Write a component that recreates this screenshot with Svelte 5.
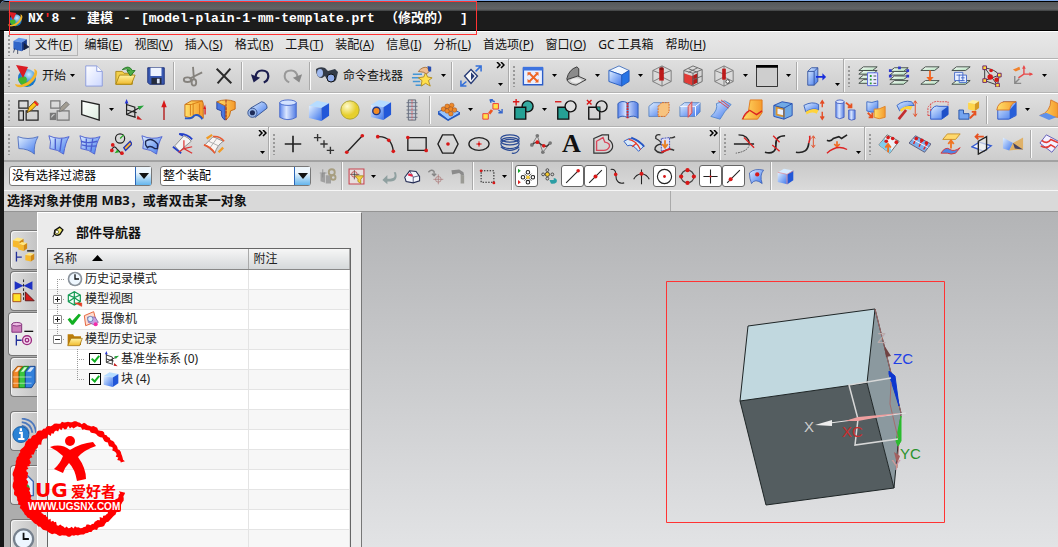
<!-- App.svelte -->
<script lang="ts">
  type Item = string;

  const menus = [
    ['文件', 'F'], ['编辑', 'E'], ['视图', 'V'], ['插入', 'S'], ['格式', 'R'],
    ['工具', 'T'], ['装配', 'A'], ['信息', 'I'], ['分析', 'L'], ['首选项', 'P'],
    ['窗口', 'O'], ['GC 工具箱', ''], ['帮助', 'H'],
  ];

  // '|' separator, 'v' drop-down arrow, '>' overflow arrow, '>>' overflow with chevrons, '>>>' same with free space before it
  const rows: Item[][][] = [
    [
      ['@start', 'new', 'open', 'save', '|', 'cut', 'delete', '|', 'undo', 'redo', '|', '@find', 'star', 'v', '|', 'touch', '>>'],
      ['fit', 'v', 'rotate', 'v', 'shaded', 'v', 'section', 'sectionGrid', 'sectionEdit', 'v', 'swatch', 'v', '|', 'exit', '>'],
      ['layerSettings', 'layerView', 'layerMove', 'layerCopy', 'points', 'csysSmall', 'v', '>>'],
    ],
    [
      ['sketch', 'sketchTask', 'plane', 'v', 'csys', 'axis', 'extrude', 'revolve', 'tube', 'cylinder', 'block', 'sphere', 'hole', 'thread', '|',
        'pattern', 'v', 'instance', 'unite', 'v', 'subtract', 'intersect', 'sew', 'split', 'divide', 'trim', 'trimBody', 'shell', 'offset', 'cylMove',
        'replace', 'patch', 'wrap', 'scale', '|', 'blend', 'v', 'faceBlend'],
    ],
    [
      ['ruled', 'curves', 'mesh', 'studio', 'nside', 'sweep', 'swept', '>>>'],
      ['point', 'pointSet', 'line', 'arc', 'rect', 'hexagon', 'ellipse', 'helix', 'spline', '@text', 'offsetCurve', 'bridge', 'project', '>>>'],
      ['trimCurve', 'curveEdge', 'curveLength', 'curveSmooth', '>'],
      ['xform', 'poles', 'flatten', 'mirror', 'twist', '|', 'snip'],
    ],
  ];

  const snaps = ['|', 'snapFilter', 'v', 'back', 'eraser', 'deselect', 'hammer', '|', 'marquee', 'v', '|', '*snapAll', 'snapMore', '*snapEnd', '*snapMid',
    'snapCurve', 'snapCross', '*snapCenter', 'snapQuad', '*snapPoint', '*snapOn', 'snapFace', '|', 'snapCube'];

  const dot = (x: number, y: number, r = 2) => `<circle cx="${x}" cy="${y}" r="${r}" fill="#d81818"/>`;
  const layer = (y: number) => `<path d="M2 ${y + 4}L7 ${y}H22L17 ${y + 4}z" fill="url(#leaf)" stroke="#3f4844"/>`;
  const sheet = (extra: string) => `<path d="M1 3Q12 8 23 4Q19 10 17 23Q11 18 2 17Q4 9 1 3z" fill="url(#sky)" stroke="#4b5fd0"/>${extra}`;
  const line = (d: string, c = '#222', w = 1.5) => `<path d="${d}" fill="none" stroke="${c}" stroke-width="${w}"/>`;
  const cube = (x: number, y: number, s: number, top = '#b6dcff', a = 'url(#sky)', b = '#2257d8') =>
    `<path d="M${x} ${y + s * 0.25}L${x + s * 0.4} ${y}L${x + s} ${y + s * 0.12}L${x + s * 0.62} ${y + s * 0.36}z" fill="${top}"/>` +
    `<path d="M${x} ${y + s * 0.25}L${x + s * 0.62} ${y + s * 0.36}V${y + s}L${x} ${y + s * 0.85}z" fill="${a}"/>` +
    `<path d="M${x + s * 0.62} ${y + s * 0.36}L${x + s} ${y + s * 0.12}V${y + s * 0.74}L${x + s * 0.62} ${y + s}z" fill="${b}"/>`;
  const cage = `<path d="M2 6L12 1L22 6V18L12 23L2 18zM2 6L12 10L22 6M12 10V23M2 18L12 13L22 18M12 1V13" fill="#ddd" fill-opacity=".5" stroke="#777"/>`;
  const globe = `<ellipse cx="13" cy="14" rx="9" ry="9" fill="url(#globe)"/><path d="M7 13Q12 11 13 15Q11 19 16 22Q6 23 4 15z" fill="#45b52c"/><path d="M1 20Q9 23 17 15Q22 9 20 5Q25 6 22 13Q17 22 8 23Q2 24 1 20z" fill="#f4b52a"/><path d="M2 1L14 3L9 14z" fill="#db1c24"/>`;

  const icons: Record<string, string> = {
    start: globe,
    find: `<path d="M1 5Q5 2 10 4L13 7L20 5L23 8L21 16Q18 20 13 17L10 12L7 14Q1 14 1 5z" fill="#333b48"/><ellipse cx="5" cy="9" rx="3" ry="4" fill="#9fb9ee"/><ellipse cx="16" cy="14" rx="4" ry="4" fill="#8fabe8" stroke="#111"/>`,
    new: `<path d="M3 1H15L21 7V23H3z" fill="url(#paper)" stroke="#8a99dc"/><path d="M15 1V7H21" fill="#fff" stroke="#8a99dc"/>`,
    open: `<path d="M2 21V7H9L11 9H20V21z" fill="#f2cf49" stroke="#ab8715"/><path d="M2 21L6 11H23L19 21z" fill="url(#gold)" stroke="#ab8715"/><path d="M9 5Q16 -1 20 6H23L18 12L14 6H17Q14 3 9 5z" fill="#4fae46" stroke="#267a2a"/>`,
    save: `<path d="M3 3H21V21H5L3 19z" fill="#3959b2" stroke="#1b2e75"/><path d="M6 3H18V12H6z" fill="#eef4ff"/><path d="M7 14H18V21H7z" fill="#242b3c"/><path d="M13 15H16V20H13z" fill="#d9e2f4"/>`,
    cut: `<g fill="none" stroke="#85827d" stroke-width="2"><path d="M12 2L13 15M22 8L8 15"/><ellipse cx="6" cy="16" rx="4" ry="2.5"/><ellipse cx="13" cy="19" rx="2.5" ry="3.5"/></g>`,
    delete: line('M4 4L20 20M19 4L5 20', '#2b2b2b', 2.2),
    undo: `<path d="M6 13Q7 6 13 6Q20 6 20 12Q20 17 15 19" fill="none" stroke="#1b1d4e" stroke-width="2.4"/><path d="M1 10L4 19L11 14z" fill="#1b1d4e"/>`,
    redo: `<path d="M18 13Q17 6 11 6Q4 6 4 12Q4 17 9 19" fill="none" stroke="#999" stroke-width="2.2"/><path d="M23 10L20 19L13 14z" fill="#888"/>`,
    star: `<path d="M2 10H12M1 14H10M2 18H10M5 22H13" stroke="#4496d6" stroke-width="1.6"/><path d="M16 8L18 13L23 14L19 17L21 23L16 20L11 23L12 17L8 14L14 13z" fill="#ffe04d" stroke="#b48d20"/><path d="M8 7Q13 1 18 3L20 7Q17 11 14 8z" fill="#efbd91" stroke="#a7743d"/><path d="M18 1L22 2L22 7L19 7z" fill="#294eb0"/>`,
    touch: `<path d="M12 5L19 12L12 20L5 12z" fill="#f8f8f8" stroke="#263a75" stroke-width="1.5"/><path d="M12 8V17L16 12z" fill="#263a75"/><path d="M17 1H23V7M23 1L17 7M1 17V23H7M1 23L7 18" fill="none" stroke="#3570d8" stroke-width="1.7"/>`,
    fit: `<path d="M1.500 3.500H22.500V21.500H1.500z" fill="#e9efff" stroke="#2b5cc8" stroke-width="1.500"/><path d="M1 2H23V6H1z" fill="#3d73df"/><path d="M8 9L17 18M17 9L8 18" stroke="#ee6524" stroke-width="2"/><path d="M6 8H10L6 12zM14 8H18V12zM6 15V19H10zM18 15V19H14z" fill="#ee6524"/>`,
    rotate: `<path d="M2 15Q4 5 13 2L15 4V16L5 19z" fill="#8b8b8b" stroke="#333"/><path d="M2 16L14 12L23 16L12 22Q4 21 2 16z" fill="#cacaca" stroke="#333"/><ellipse cx="12" cy="17" rx="6" ry="2.500" fill="#ededed"/>`,
    shaded: `<path d="M1 6L12 1L23 6L15 11z" fill="#f0f7ff" stroke="#4773bd"/><path d="M1 6L15 11V23L1 18z" fill="url(#sky)" stroke="#245cbe"/><path d="M15 11L23 6V18L15 23z" fill="#2674e6" stroke="#245cbe"/>`,
    section: `${cage}<path d="M9 4H14V17H9z" fill="#bd1b1b"/><ellipse cx="11.500" cy="4" rx="2.500" ry="1.500" fill="#891010"/>`,
    sectionGrid: `<path d="M2 9L11 12V22L2 19z" fill="#e33b36"/><path d="M11 12L17 9V19L11 22z" fill="#b61a19"/><path d="M2 6L12 1L22 5V18L12 23L2 19zM2 6L12 9L22 5M12 9V23M7 4L17 8V20M12 16L22 12M17 3L7 8" fill="none" stroke="#666"/>`,
    sectionEdit: `${cage}<path d="M10 4H14V16H10z" fill="#bd1b1b"/><circle cx="16" cy="18" r="2" fill="#fff" stroke="#333"/>`,
    swatch: `<path d="M.500 .500H23.500V23.500H.500z" fill="#cecece" stroke="#222"/><path d="M0 0H24V3H0z" fill="#000"/>`,
    exit: `<path d="M3 7L7 3H14V18L10 22H3z" fill="url(#sky)" stroke="#35539e"/><path d="M3 7H10V22M10 7L14 3" fill="none" stroke="#35539e"/><path d="M12 12H19V9L23 13L19 17V14H12z" fill="#182edc"/>`,
    layerSettings: `${layer(16)}${layer(11)}${layer(6)}${layer(2)}<path d="M11.500 8.500H22.500V22.500H11.500z" fill="#e9edff" stroke="#5665df"/><path d="M14 12H16M14 16H16M14 20H16" stroke="#2a9d35" stroke-width="2"/><path d="M18 12H21M18 16H21M18 20H21" stroke="#444"/>`,
    layerView: `${layer(17)}${layer(12)}${layer(7)}${layer(3)}<path d="M1 6H4M11 3H14M20 6H23M1 12H4M20 12H23" stroke="#2e39cc" stroke-width="3"/>`,
    layerMove: `${layer(17)}${layer(2)}<path d="M11 6H13V13H16L12 18L8 13H11z" fill="#f36421"/>`,
    layerCopy: `${layer(17)}${layer(2)}<path d="M5 8H14V17H5zM10 11H18V19H10z" fill="#e9efff" stroke="#4267c8"/><path d="M7 11H11M12 14H16M12 17H16" stroke="#4267c8"/>`,
    points: `${line('M4 3V17L18 22L20 11Q16 5 4 3L18 22M4 17L20 11', '#333', 1)}${dot(11, 6)}${dot(10, 13, 3)}${dot(17, 16, 2.5)}<path d="M2 1H6V5H2zM2 15H6V19H2zM18 9H22V13H18zM16 20H20V24H16z" fill="#ffd93d" stroke="#681c68"/>`,
    csysSmall: `${line('M13 2V10H22M13 10L7 14', '#e84a4a')}${line('M3 12V20H10M3 20L8 15', '#888')}<path d="M1 5L8 2L9 5L4 7z" fill="#f1822b"/><path d="M13 0L11 4H15zM23 10L19 8V12z" fill="#e84a4a"/>`,
    sketch: `<path d="M2 2H12V10H2zM2 13H7V23H2zM10 13H23V23H10z" fill="none" stroke="#222" stroke-width="1.300"/><path d="M11 15L13 9L20 2L23 5L16 12z" fill="#ffc61a" stroke="#6b4a15"/><path d="M19 3L23 7" stroke="#e22" stroke-width="2"/>`,
    sketchTask: `<path d="M3 2H13V10H3zM10 13H23V23H10z" fill="none" stroke="#777" stroke-width="1.300"/><path d="M2 15H9V23H2z" fill="#777"/><path d="M4 20Q4 17 7 17" stroke="#eee" fill="none"/><path d="M12 14L14 9L20 3L23 6L17 12z" fill="#a19c91" stroke="#777"/>`,
    plane: `<path d="M3 2L22 6V23L3 17z" fill="url(#plane)" stroke="#222" stroke-width="1.500"/>`,
    csys: `<path d="M5 3V17L15 20M5 17L20 9M5 6L14 9V19M5 12L16 15" fill="none" stroke="#222" stroke-width="1.300"/><path d="M5 0L3 5H7z" fill="#2433d5"/><path d="M24 7L17 8L19 12z" fill="#26a33a"/><path d="M22 23L16 22L17 18z" fill="#c62020"/>`,
    axis: `<path d="M12 8V23" stroke="#b41a1a" stroke-width="1.500"/><path d="M12 1L9 9H15z" fill="#d81818"/>`,
    extrude: `<path d="M1 6L8 2H20L21 5V21L18 18Q13 15 9 21L1 19z" fill="url(#orange)" stroke="#c46a14"/><path d="M7 6V18M10 5V18M17 5V17M1 6L8 6L20 2" fill="none" stroke="#d67c15"/><path d="M1 21Q9 22 11 18Q16 16 20 22" fill="none" stroke="#2458c8" stroke-width="2"/><path d="M23 17V10" stroke="#d22" stroke-width="1.500"/><path d="M23 6L21 11H24z" fill="#d22"/>`,
    revolve: `<path d="M2 3L11 5V23Q6 20 7 13L2 11z" fill="#4c78df" stroke="#2545a0"/><path d="M2 3Q12 -1 22 3V11L17 13Q17 19 12 23V8z" fill="url(#orange)" stroke="#c46a14"/><path d="M12 1V23" stroke="#922" stroke-dasharray="3 1"/>`,
    tube: `<path d="M5 10L17 3Q23 4 23 10L10 20z" fill="url(#sky)" stroke="#33518f"/><circle cx="7" cy="15" r="5" fill="#9cb8e8" stroke="#33518f"/><circle cx="7" cy="15" r="2.800" fill="#1d2b58"/>`,
    cylinder: `<path d="M3 4H21V20Q12 25 3 20z" fill="url(#steel)" stroke="#4668ca"/><ellipse cx="12" cy="4" rx="9" ry="3" fill="#d3e2ff" stroke="#4668ca"/>`,
    block: cube(1, 2, 22),
    sphere: `<circle cx="12" cy="12" r="10" fill="url(#ball)" stroke="#aaa031"/>`,
    hole: `${cube(1, 1, 22)}<circle cx="7" cy="13" r="4" fill="#f38a22" stroke="#1c3688" stroke-width="1.500"/>`,
    thread: `<path d="M8 1H16V23H8z" fill="#c7cdd8" stroke="#5d6470"/><path d="M6 4H18M6 8H18M6 12H18M6 16H18M6 20H18" stroke="#687083"/><path d="M12 1V23" stroke="#d55" stroke-dasharray="2 1"/>`,
    pattern: `<path d="M0 14L12 9L24 15L11 23z" fill="#96c4ff" stroke="#2559c0"/><path d="M0 14V17L11 24L24 17V15L11 22z" fill="#2559c0"/><g fill="#ee8a2a" stroke="#a64e13" stroke-width=".600"><circle cx="6" cy="11" r="2.500"/><circle cx="10" cy="8" r="2.500"/><circle cx="15" cy="7" r="2.500"/><circle cx="10" cy="13" r="2.500"/><circle cx="14" cy="11" r="2.500"/><circle cx="18" cy="12" r="2.500"/><circle cx="14" cy="16" r="2.500"/></g>`,
    instance: `<path d="M13 5H19V11H13zM2 16H8V22H2z" fill="#ffe24b" stroke="#e33"/><path d="M9 16L12 12" stroke="#e52" stroke-width="3"/><path d="M15 3L10 1M13 0L10 1L11 4M19 12L23 15M23 11V15H19" fill="none" stroke="#3464cb" stroke-width="1.500"/>`,
    unite: `<circle cx="17" cy="8" r="6" fill="#35aaa0" stroke="#111" stroke-width="1.500"/><path d="M3 9H15V22H3z" fill="#25a195" stroke="#111" stroke-width="1.500"/><path d="M1 3H8M4.500 0V7" stroke="#d81818" stroke-width="1.500"/>`,
    subtract: `<path d="M3 9H15V22H3z" fill="#25a195" stroke="#111" stroke-width="1.500"/><circle cx="17" cy="8" r="6" fill="#ddd" stroke="#111" stroke-width="1.500"/><path d="M0 3H7" stroke="#d81818" stroke-width="1.500"/>`,
    intersect: `<path d="M3 9H15V22H3z" fill="none" stroke="#111" stroke-width="1.500"/><path d="M11 9H15V13Q11 13 11 9z" fill="#25a195"/><circle cx="17" cy="8" r="6" fill="none" stroke="#111" stroke-width="1.500"/><path d="M1 1L6 6M6 1L1 6" stroke="#d81818" stroke-width="1.500"/>`,
    sew: `<path d="M1 5Q5 1 11 4V20Q5 17 1 21zM12 4Q19 1 23 5V21Q19 17 12 20z" fill="url(#steel)" stroke="#2b59b4"/><path d="M11.500 4V21" stroke="#d22" stroke-width="2" stroke-dasharray="2 1"/>`,
    split: `<path d="M1 8L6 4H22V14L17 19H1z" fill="url(#sky)" stroke="#5f87c1"/><path d="M11 8L15 4H23V14L19 19H11z" fill="#f7c37f" stroke="#d7651c" stroke-dasharray="2 1"/>`,
    divide: `<path d="M1 8L6 4H23V14L18 19H1z" fill="url(#sky)" stroke="#5f87c1"/><path d="M1 8H18V19M18 8L23 4" fill="none" stroke="#fff"/><path d="M10 20V8L14 3V15z" fill="#f1b0ae" stroke="#d44"/>`,
    trim: `<path d="M1 19Q9 12 7 5L16 2L23 6Q15 14 11 22z" fill="url(#sky)" stroke="#5688cc"/><path d="M9 2L20 10M12 1L21 8" stroke="#d44"/>`,
    trimBody: `<path d="M10 1H23V15L18 22H1L8 14z" fill="url(#orange)" stroke="#e17a1a"/><path d="M9 12L17 17L23 13M9 13Q4 15 2 22" fill="none" stroke="#d22" stroke-width="1.500"/>`,
    shell: `<path d="M2 7L11 3L22 5V18L13 22L2 19z" fill="#70a9e5" stroke="#244db2"/><path d="M5 9L13 11V19L5 17z" fill="#eaf0fc" stroke="#d79430" stroke-width="2"/><path d="M2 7L13 10L22 5M13 10V22" fill="none" stroke="#234eae"/>`,
    offset: `<path d="M1 7Q10 2 17 6V12Q10 9 3 14z" fill="url(#sky)" stroke="#3a63ba"/><path d="M3 14Q10 9 17 12L15 16Q9 13 4 17z" fill="#ffd33b"/><path d="M21 2V9M21 14V22M19 5L21 2L23 5M19 19L21 22L23 19" stroke="#e44a22" fill="none" stroke-width="1.500"/>`,
    cylMove: `<path d="M2 3H11V20Q6 23 2 20z" fill="url(#steel)" stroke="#4b64c0"/><ellipse cx="6.500" cy="3" rx="4.500" ry="2" fill="#dbe6ff" stroke="#4b64c0"/><path d="M16 12H23V22Q19 24 16 22z" fill="url(#steel)" stroke="#4b64c0"/><path d="M13 4L19 9M19 5V9H15" fill="none" stroke="#e65221" stroke-width="2"/>`,
    replace: `<path d="M2 3Q7 5 14 2V13Q8 16 2 13z" fill="url(#sky)" stroke="#3a68c5"/><path d="M10 11Q15 12 22 8V20Q15 23 10 20z" fill="url(#orange)" stroke="#dd842c"/><path d="M3 15L8 20M8 15V20H4" fill="none" stroke="#e65221" stroke-width="2"/>`,
    patch: `<path d="M1 7Q8 1 17 3L20 7Q10 7 4 13z" fill="url(#sky)" stroke="#3a68c5"/><path d="M4 12Q10 6 18 8L16 12Q10 9 6 14z" fill="#ffd33b"/><path d="M3 22L11 12" stroke="#c32d2d" stroke-width="3"/><path d="M21 2V19M19 5L21 2L23 5M19 16L21 19L23 16" fill="none" stroke="#e44a22"/>`,
    wrap: `<path d="M4 13Q8 6 13 8H23V17L16 22H4z" fill="url(#sky)" stroke="#2854c7"/><path d="M16 22V13L23 8V17z" fill="#1f50c8"/><path d="M1 18V9Q7 1 14 3H23V7M1 18H4M4 13V5" fill="none" stroke="#d44" stroke-dasharray="2 1"/>`,
    scale: `${cube(11, 1, 12, '#fff1a1', '#ffd64a', '#d69b23')}<path d="M1 12H6V16H12V22H1z" fill="#75a5f0" stroke="#2451a6"/><path d="M13 21L19 15M15 14H19V18" fill="none" stroke="#e65221" stroke-width="2"/>`,
    blend: `<path d="M3 10L9 3H23V18L15 22H3z" fill="url(#sky)" stroke="#2854c7"/><path d="M2 12Q3 4 10 3H23Q17 5 16 12z" fill="url(#orange)" stroke="#d7762a"/><path d="M16 12V22L23 17V4z" fill="#285fd8"/>`,
    faceBlend: `<path d="M14 1L22 5V20L2 18Q14 14 14 1z" fill="url(#orange)" stroke="#d7762a"/><path d="M1 18L9 15L20 20L12 23z" fill="#5e91eb"/>`,
    ruled: `<path d="M1 4Q12 8 23 4Q18 12 19 23Q12 17 2 17z" fill="url(#sky)" stroke="#5271be"/>`,
    curves: sheet(line('M8 6L8 18M15 6L13 20', '#4b5fd0')),
    mesh: sheet(line('M8 6L8 18M15 6L13 20M2 9Q10 12 20 9M3 13Q10 15 19 14', '#4b5fd0')),
    studio: `<circle cx="11" cy="6" r="5" fill="none" stroke="#222" stroke-width="1.300"/>${line('M11 6L15 2', '#2a2', 1.3)}${line('M2 19Q4 12 8 18L12 22', '#222', 1.3)}${dot(2, 19)}${dot(13, 22)}${dot(3, 13)}<path d="M15 16L22 9L24 12L17 19z" fill="#ffb431" stroke="#2638b2" stroke-width="1.500"/><path d="M5 22L8 18L10 21z" fill="#2a2"/>`,
    nside: sheet('<path d="M5 9Q10 5 15 9L18 12V17H15Q10 13 7 16L5 13z" fill="none" stroke="#1d2754" stroke-width="1.500"/>'),
    sweep: `<path d="M3 14L13 3Q18 5 21 9L15 14Q10 17 9 21z" fill="#f3f3f3" stroke="#888"/><path d="M12 3L8 1Q17 1 22 7M1 15L10 22" fill="none" stroke="#233fc8" stroke-width="2"/><path d="M13 8V17L22 22M13 17L22 15M13 17L7 21" fill="none" stroke="#d33" stroke-width="1.300"/>`,
    swept: `<path d="M2 13L11 4L22 9Q15 14 13 22z" fill="#f9f5f3" stroke="#888"/><path d="M6 9L17 14M15 6L7 17" stroke="#aaa"/><path d="M11 4Q18 3 23 9M1 13Q8 15 13 22" fill="none" stroke="#e95a31" stroke-width="1.800"/><path d="M4 6L10 2M17 21L22 16" stroke="#f09b26" stroke-width="2.500"/>`,
    point: line('M12 3V21M3 12H21', '#222', 1.8),
    pointSet: line('M5 1V9M1 5H9M12 8V16M8 12H16M19 15V23M15 19H23', '#333'),
    line: `${line('M3 21L20 3')}${dot(3, 21)}${dot(20, 3)}`,
    arc: `${line('M3 4Q18 3 20 20')}${dot(3, 4)}${dot(15, 8)}${dot(20, 20)}`,
    rect: `<path d="M2 5H22V19H2z" fill="none" stroke="#222" stroke-width="1.500"/>${dot(2, 5)}${dot(22, 19)}`,
    hexagon: `<path d="M6 2H18L23 12L18 22H6L1 12z" fill="none" stroke="#222" stroke-width="1.500"/>${dot(12, 12)}`,
    ellipse: `<ellipse cx="12" cy="12" rx="11" ry="7" fill="none" stroke="#222" stroke-width="1.500"/><path d="M9 12H15M12 9V15" stroke="#d22"/>${dot(12, 12, 1.5)}`,
    helix: `<g fill="none" stroke="#2a4a94" stroke-width="1.300"><ellipse cx="12" cy="6" rx="10" ry="4"/><ellipse cx="12" cy="9" rx="10" ry="4"/><ellipse cx="12" cy="12" rx="10" ry="5"/><path d="M2 15Q12 23 22 15M14 22Q20 23 22 17"/></g>`,
    spline: `${line('M2 13L8 3L14 21L22 11', '#777', 1)}${line('M2 14Q6 7 13 13Q19 17 22 10', '#333')}${dot(8, 10)}${dot(15, 14)}<g fill="#777"><circle cx="8" cy="3" r="2"/><circle cx="14" cy="21" r="2"/><circle cx="2" cy="13" r="2"/><circle cx="22" cy="11" r="2"/></g>`,
    offsetCurve: `<path d="M2 6L11 2H18V7Q24 11 22 17Q19 22 13 22H2z" fill="none" stroke="#333" stroke-width="1.300"/><path d="M5 9L12 5L14 10Q20 11 19 15Q17 19 13 19H5z" fill="none" stroke="#d9465a" stroke-width="1.500"/>`,
    bridge: `<path d="M1 9Q11 1 23 14L17 20Q10 11 5 14z" fill="#d8eafa" stroke="#2756c4"/><path d="M9 5Q19 9 23 15" fill="none" stroke="#2756c4" stroke-width="2"/><path d="M6 7Q14 8 19 18M10 15L15 11" fill="none" stroke="#e93925" stroke-width="1.500"/>`,
    project: `${line('M7 2Q1 1 2 6Q8 9 8 12Q1 13 1 18Q5 23 10 21L14 18Q19 17 22 19M17 5Q20 6 23 4', '#333')}<path d="M8 6V20L17 17V5z" fill="#ddddf5" stroke="#3b49b5" stroke-dasharray="2 1"/><path d="M12 8V15M9 12L12 16L15 12" stroke="#e98024" fill="none" stroke-width="2"/><path d="M8 21L18 17" stroke="#d22" stroke-width="2"/>`,
    trimCurve: `${line('M1 12H23M6 2Q17 2 18 12')}<path d="M18 12Q17 20 3 22" fill="none" stroke="#555" stroke-dasharray="2 1"/><path d="M12 5L23 16" stroke="#d22" stroke-width="1.500"/>`,
    curveEdge: `${line('M1 21Q13 24 13 13Q12 3 23 3', '#222', 1.8)}<path d="M10 3L17 10M9 13L17 20" stroke="#d22" stroke-width="1.500"/>`,
    curveLength: `${line('M1 21Q14 23 15 11', '#222', 1.8)}${line('M15 11Q17 7 16 3', '#d22', 1.8)}<path d="M20 4V15M18 6L20 3L22 6M18 13L20 16L22 13" fill="none" stroke="#e44a22"/>`,
    curveSmooth: `${line('M1 8Q5 10 8 6L14 4L17 6L23 2', '#222', 1.8)}<path d="M12 9V14M9 12L12 15L15 12" stroke="#f06a21" fill="none" stroke-width="1.800"/>${line('M1 22Q12 12 23 18', '#d22')}`,
    xform: `<path d="M1 13L10 2L23 9L13 22z" fill="#eef1f5" stroke="#666"/><path d="M1 13L7 6L15 19L13 22z" fill="#80cdec"/>${dot(11, 5)}${dot(16, 6)}${dot(20, 10)}${dot(9, 9)}<path d="M11 21V13M8 16L11 12L14 16" fill="none" stroke="#f07422" stroke-width="2"/>`,
    poles: `<path d="M0 11L7 3L24 12L17 21z" fill="#7eb0ec" stroke="#5a5a78"/><path d="M5 12L8 5M11 15L14 8M16 18L20 11" stroke="#d22" stroke-width="1.500"/><path d="M4 7L21 16" stroke="#fff"/>${dot(8, 6)}${dot(14, 8)}${dot(19, 11)}`,
    flatten: `<path d="M3 7L8 1H22L17 7z" fill="#ffd96d" stroke="#c79029"/><path d="M12 17V9M9 12L12 8L15 12" fill="none" stroke="#f07422" stroke-width="2"/><path d="M1 22Q6 14 11 18Q15 21 22 16L17 22Q12 24 8 22z" fill="#4e85e4" stroke="#d33"/>`,
    mirror: `<path d="M1 15L9 10L22 14L14 20z" fill="#f5f7ff" stroke="#345bd0" stroke-width="1.500"/><path d="M8 9L17 4V18L8 23z" fill="#eaeaea" fill-opacity=".7" stroke="#222" stroke-width="1.500"/><path d="M5 4H14M8 1L5 4L8 7" fill="none" stroke="#e65221" stroke-width="2"/>`,
    twist: `<path d="M1 5L12 11L8 19L1 17z" fill="url(#sky)"/><path d="M12 11L23 5V18Q16 18 8 19z" fill="#dfb168"/><path d="M12 11L23 18L14 17z" fill="#446"/>`,
    snip: `<path d="M1 11L8 2L23 10L14 21z" fill="#f4f1ff" stroke="#5b55b5"/><path d="M3 8Q9 13 13 7L22 11M2 14Q8 18 13 13L18 16" fill="none" stroke="#e23b35" stroke-width="1.800"/>`,
    snapFilter: `<path d="M1.500 1.500H22.500V22.500H1.500z" fill="#e8dede" stroke="#c84450" stroke-width="1.500"/><path d="M9 3V16M3 9H16" stroke="#333"/><circle cx="9" cy="9" r="4" fill="none" stroke="#b33"/><path d="M10 11H22L18 16V22L14 19V16z" fill="#f6d13c" stroke="#977b15"/>`,
    back: `<path d="M18 6Q22 15 13 15H9V10L2 17L9 23V19H14Q25 18 21 6z" fill="#8fa0a0"/>`,
    eraser: `<path d="M1 13L8 4L17 5L22 12V18L13 21L3 19z" fill="#f3f5fc" stroke="#222a52" stroke-width="1.500"/><path d="M8 4L13 13V21M13 13L21 11" fill="none" stroke="#222a52"/><path d="M6 9L12 11" stroke="#e24" stroke-width="3"/>`,
    deselect: `<path d="M2 6Q6 1 10 5V10M7 8L10 11L13 8" fill="none" stroke="#888" stroke-width="2"/><circle cx="16" cy="16" r="4" fill="none" stroke="#a77"/><path d="M16 9V23M9 16H23" stroke="#a77"/>`,
    hammer: `<path d="M2 3L13 2L19 6L20 11L16 10L13 7L3 9z" fill="#8b8b8b"/><path d="M15 9V22H20V11" fill="#9b9b95"/>`,
    marquee: `<path d="M3 4H21V20H3z" fill="none" stroke="#222" stroke-width="1.500" stroke-dasharray="2 2"/>${dot(3, 4)}${dot(21, 21)}`,
    snapAll: `<g fill="none" stroke="#222" stroke-width="1.500"><circle cx="14" cy="6" r="2.500"/><circle cx="14" cy="20" r="2.500"/><circle cx="7" cy="13" r="2.500"/><circle cx="21" cy="13" r="2.500"/></g><path d="M9 8L19 18M19 8L9 18" stroke="#222"/><circle cx="14" cy="13" r="2.500" fill="#f5c92c"/><path d="M0 1V7L4 4z" fill="#16a62d"/><path d="M0 17V23L4 20z" fill="#d22"/>`,
    snapMore: `<g fill="none" stroke="#222"><circle cx="9" cy="3" r="2"/><circle cx="9" cy="15" r="2"/><circle cx="3" cy="9" r="2"/><circle cx="16" cy="9" r="2"/></g><circle cx="9" cy="9" r="3" fill="#f5c92c" stroke="#222"/><path d="M12 17H18V14Q24 15 22 20Q19 23 14 22z" fill="#2c9ea4"/>`,
    snapEnd: `${line('M3 21L20 4')}${dot(20, 4, 2.5)}`,
    snapMid: `${line('M3 21L21 3')}${dot(12, 12, 2.8)}`,
    snapCurve: `${line('M1 2Q8 1 8 8L9 16Q12 23 20 21')}${dot(8, 9, 2.5)}`,
    snapCross: `${line('M1 16Q4 9 12 8Q20 9 23 16M12 2V23')}${dot(12, 8, 2.8)}`,
    snapCenter: `<circle cx="12" cy="12" r="10" fill="none" stroke="#222" stroke-width="1.600"/>${dot(12, 12)}`,
    snapQuad: `<circle cx="12" cy="12" r="9" fill="none" stroke="#444" stroke-width="1.600"/>${dot(12, 3, 3)}${dot(12, 21, 3)}${dot(3, 12, 3)}${dot(21, 12, 3)}`,
    snapPoint: `${line('M12 2V22M2 12H22')}${dot(12, 12, 1.5)}`,
    snapOn: `${line('M3 21L21 3')}${dot(8, 16, 2.8)}`,
    snapFace: `<path d="M2 7Q9 0 22 3Q16 10 20 22Q10 14 5 22Q2 15 2 7z" fill="url(#sky)" stroke="#2c52ad"/>${dot(13, 9, 3)}`,
    snapCube: `${cube(1, 1, 22, '#d6ebff')}${line('M1 6L14 9L23 4M14 9V23', '#e58a94', 1)}`,
    chain: `<path d="M2 9L8 7V21L2 19zM9 11H16V22H9z" fill="#a0a0a0"/><circle cx="17" cy="7" r="4" fill="none" stroke="#a79e80" stroke-width="2.500"/><circle cx="19" cy="14" r="3" fill="none" stroke="#a79e80" stroke-width="2.500"/><path d="M5 3V14M1 8H10" stroke="#888"/>`,
    menuCube: `${cube(2, 1, 19, '#6699ed', '#3066c9', '#16388b')}<path d="M17 9L24 14L17 18zM4 16L2 22M8 18V24" stroke="#182342" fill="#182342"/>`,
    pin: `<path d="M8 13L3 20" stroke="#222" stroke-width="2"/><path d="M7 8L16 2L22 7L17 15Q10 20 6 14z" fill="#f0e765" stroke="#111" stroke-width="2.500"/><circle cx="11" cy="11" r="3" fill="#fff" stroke="#111"/>`,
    clock: `<circle cx="12" cy="12" r="11" fill="#8a929b"/><circle cx="12" cy="12" r="8.500" fill="#eef7ff"/>${line('M12 5V12H18', '#111', 2)}`,
    views: `<path d="M2 6L11 1L20 6V16L11 21L2 16zM2 6L11 10L20 6M11 1V21M2 16L11 10L20 16" fill="#f2fff6" stroke="#159a54" stroke-width="1.800"/><path d="M12 18L22 23L22 18z" fill="#e43d22" stroke="#e43d22"/>`,
    check: `<path d="M1 13L5 10L9 15L20 3L24 5L11 22H8z" fill="#12b022"/>`,
    camera: `<path d="M2 7L16 1L20 16L4 22z" fill="#ffdccf" stroke="#e56943" stroke-width="1.500"/><path d="M7 9H18L23 17L17 21L8 17z" fill="#c6a1e1" stroke="#73529a"/><circle cx="11" cy="12" r="4" fill="#dcecff" stroke="#4966a2"/><circle cx="19" cy="20" r="3" fill="#f52ba9"/>`,
    folder: `<path d="M1 21V5H9L11 8H21V21z" fill="#bb7d0a"/><path d="M1 22L6 11H23L19 22z" fill="url(#gold)" stroke="#9b6808"/>`,
    assembly: `${cube(1, 0, 12, '#ffe780', '#f7b92c', '#d28a13')}${cube(7, 5, 10, '#ffe780', '#f7b92c', '#d28a13')}${line('M17 15H25', '#111')}${line('M5 16V27M5 22H11', '#23309a')}${cube(15, 17, 10, '#ffe780', '#f7b92c', '#d28a13')}`,
    constraint: `<path d="M3 3L13 8L3 13zM23 3L13 8L23 13z" fill="#1f32c2"/><path d="M13 1V26" stroke="#111" stroke-dasharray="3 2"/><path d="M1 17H10V26H1z" fill="#ffe12b" stroke="#a14317"/><path d="M15 15V25H25z" fill="#d31a1a" stroke="#511"/>`,
    part: `<path d="M1 3H12V12H1z" fill="#cb7db9" stroke="#7a2674"/><ellipse cx="6.500" cy="3" rx="5.500" ry="2" fill="#efbfe5" stroke="#7a2674"/>${line('M15 11H25', '#111', 1.5)}${line('M6 15V27M6 21H12', '#23309a')}<circle cx="18" cy="21" r="5" fill="#f5d8ef" stroke="#9b2b80" stroke-width="1.500"/><circle cx="18" cy="21" r="2" fill="none" stroke="#9b2b80" stroke-width="1.500"/>`,
    books: `<path d="M1 8L6 2H12L8 8V26H1z" fill="#f18728" stroke="#96500d"/><path d="M8 8L13 2H19L15 8V26H8z" fill="#39c63f" stroke="#157219"/><path d="M15 8L20 2H26V20L22 26H15z" fill="#3381db" stroke="#153f86"/><path d="M3 8L7 3H10L6 8zM10 8L14 3H17L13 8zM17 8L21 3H25L21 8z" fill="#fff" fill-opacity=".8"/><path d="M1 14H8M1 21H8M8 14H15M8 21H15M15 14H22M15 21H22" stroke="#fff" stroke-opacity=".6"/>`,
    web: `<path d="M11 4Q21 5 23 16M11 8Q18 9 19 17M11 0Q26 1 27 16" fill="none" stroke="#4d79bd" stroke-width="2"/><circle cx="10" cy="18" r="9" fill="#2a82d5" stroke="#195b9f"/><path d="M10 11V14M8 16H11V23M7 23H14" fill="none" stroke="#fff" stroke-width="2.500"/>`,
    page: `<path d="M5 3H17L24 10V26H5z" fill="#e4efff" stroke="#3c68af" stroke-width="1.500"/><circle cx="14" cy="18" r="6" fill="#3a9a35"/>`,
    clockTab: `<circle cx="13" cy="14" r="12" fill="#76808d"/><circle cx="13" cy="14" r="9.500" fill="#edf6ff"/>${line('M13 7V14H19', '#111', 2)}`,
  };

  const tabs = [
    { icon: 'assembly', label: '装配导航器' },
    { icon: 'constraint', label: '约束导航器' },
    { icon: 'part', label: '部件导航器', active: true },
    { icon: 'books', label: '重用库' },
    { icon: 'web', label: '浏览器', spaced: true },
    { icon: 'page', label: '页面', spaced: true },
    { icon: 'clockTab', label: '历史记录', spaced: true },
  ];

  const tree = [
    { icon: 'clock', name: '历史记录模式', guide: 'first' },
    { icon: 'views', name: '模型视图', guide: 'mid', toggle: '+' },
    { icon: 'camera', name: '摄像机', guide: 'mid', toggle: '+', tick: true },
    { icon: 'folder', name: '模型历史记录', guide: 'last', toggle: '-' },
    { icon: 'csys', name: '基准坐标系 (0)', guide: 'mid', child: true },
    { icon: 'block', name: '块 (4)', guide: 'last', child: true },
  ];
  const blankRows = Array(10).fill(0);

  // rough brush ring, heavy on the left and open on the right
  function brushRing() {
    const outer: string[] = [];
    const inner: string[] = [];
    for (let deg = 14; deg <= 342; deg += 2) {
      const a = (deg * Math.PI) / 180;
      const left = Math.max(0, -Math.cos(a));
      const rough = (n: number) => Math.abs(Math.sin(deg * n) * 43758.5) % 1;
      const thick = 5 + 9 * left + 3 * Math.max(0, Math.sin(a));
      const r1 = 58 - rough(1.3) * 2;
      const r2 = 57 - thick + (rough(2.7) - 0.5) * 3;
      outer.push(`${70 + r1 * Math.cos(a)} ${479 + r1 * Math.sin(a)}`);
      inner.unshift(`${70 + r2 * Math.cos(a)} ${479 + r2 * Math.sin(a)}`);
    }
    return 'M' + outer.concat(inner).join('L') + 'z';
  }
</script>

{#snippet icon(name: string, size: number)}
  <svg width={size} height={size} viewBox="0 0 24 24" aria-hidden="true">{@html icons[name]}</svg>
{/snippet}

{#snippet arrow()}
  <svg width="5" height="3" viewBox="0 0 5 3" aria-hidden="true"><path d="M0 0H5L2.500 3z" /></svg>
{/snippet}

{#snippet tool(item: string, size: number)}
  {#if item === '|'}
    <span class="sep"></span>
  {:else if item === 'v'}
    <button class="drop" aria-label="drop-down">{@render arrow()}</button>
  {:else if item[0] === '>'}
    <button class="more" class:chevrons={item === '>>'} class:far={item === '>>>'} aria-label="toolbar options">
      {#if item !== '>'}
        <svg width="9" height="7" viewBox="0 0 9 7" aria-hidden="true"><path d="M1 0L4 3L1 6M5 0L8 3L5 6" fill="none" stroke="#000" stroke-width="1.500" /></svg>
      {/if}
      <i>{@render arrow()}</i>
    </button>
  {:else if item === '@start'}
    <button class="labelled">{@render icon('start', 24)}<span>开始</span>{@render arrow()}</button>
  {:else if item === '@find'}
    <button class="labelled">{@render icon('find', 24)}<span>命令查找器</span></button>
  {:else if item === '@text'}
    <button class="tool letter">A</button>
  {:else if item[0] === '*'}
    <button class="tool pressed" aria-label={item.slice(1)}>{@render icon(item.slice(1), size)}</button>
  {:else}
    <button class="tool" aria-label={item}>{@render icon(item, size)}</button>
  {/if}
{/snippet}

<svg class="defs" width="0" height="0" aria-hidden="true">
  <defs>
    <linearGradient id="sky" x1="0" y1="0" x2="1" y2="1"><stop offset="0" stop-color="#e2f0ff" /><stop offset="1" stop-color="#3b74ec" /></linearGradient>
    <linearGradient id="steel"><stop offset="0" stop-color="#5f88ee" /><stop offset=".4" stop-color="#dbe7ff" /><stop offset="1" stop-color="#527ce4" /></linearGradient>
    <linearGradient id="gold" x1="0" y1="0" x2="0" y2="1"><stop offset="0" stop-color="#fff3a3" /><stop offset="1" stop-color="#f0ba2c" /></linearGradient>
    <linearGradient id="orange"><stop offset="0" stop-color="#ffe06a" /><stop offset="1" stop-color="#f59a2c" /></linearGradient>
    <linearGradient id="leaf" x1="0" y1="0" x2="1" y2="1"><stop offset="0" stop-color="#fff" /><stop offset="1" stop-color="#a9dcb4" /></linearGradient>
    <linearGradient id="plane" x1="0" y1="0" x2="1" y2="1"><stop offset="0" stop-color="#fff" /><stop offset="1" stop-color="#dcecdf" /></linearGradient>
    <linearGradient id="paper" x1="0" y1="0" x2="1" y2="1"><stop offset="0" stop-color="#fff" /><stop offset="1" stop-color="#ccd7ff" /></linearGradient>
    <radialGradient id="ball" cx=".35" cy=".3"><stop offset="0" stop-color="#fffbd0" /><stop offset="1" stop-color="#e6cf2c" /></radialGradient>
    <radialGradient id="globe" cx=".6" cy=".3"><stop offset="0" stop-color="#c9ecff" /><stop offset="1" stop-color="#1577cc" /></radialGradient>
  </defs>
</svg>

<div class="app">
  <header class="title">
    {@render icon('start', 16)}
    <h1>
      <span class="product"><span>NX</span><em>'</em><span>8</span></span>
      <span>-</span><span>建模</span><span>-</span><span>[model-plain-1-mm-template.prt</span><span>（修改的）</span><span>]</span>
    </h1>
    <div class="mark"></div>
  </header>

  <div class="frame">
    <nav class="menu">
      <span class="grip"></span>
      {@render icon('menuCube', 17)}
      {#each menus as [name, key], i}
        <button class:current={i === 0}>{name}{#if key}(<u>{key}</u>){/if}</button>
      {/each}
    </nav>

    {#each rows as row}
      <div class="row">
        {#each row as bar}
          <div class="bar" role="toolbar">
            <span class="grip"></span>
            {#each bar as item}{@render tool(item, 22)}{/each}
          </div>
        {/each}
      </div>
    {/each}

    <div class="selection">
      <span class="combo first"><select aria-label="选择过滤器"><option>没有选择过滤器</option></select><i></i></span>
      <span class="combo"><select aria-label="选择范围"><option>整个装配</option></select><i></i></span>
      {@render tool('chain', 18)}
      {#each snaps as item}{@render tool(item, 17)}{/each}
    </div>

    <div class="status">
      <p>选择对象并使用 MB3，或者双击某一对象</p>
      <p></p>
    </div>

    <main>
      <div class="tabs">
        {#each tabs as tab}
          <button class="tab" class:active={tab.active} class:spaced={tab.spaced} aria-label={tab.label}>
            <svg width="24" height="26" viewBox="0 0 27 28" aria-hidden="true">{@html icons[tab.icon]}</svg>
          </button>
        {/each}
      </div>

      <section class="navigator">
        <h2>{@render icon('pin', 13)}<span>部件导航器</span></h2>
        <div class="tree">
          <table>
            <thead>
              <tr><th class="name">名称 <svg width="11" height="6" viewBox="0 0 11 6" aria-hidden="true"><path d="M0 6L5.500 0L11 6z" /></svg></th><th>附注</th></tr>
            </thead>
            <tbody>
              {#each tree as node}
                <tr>
                  <td>
                    <div class="node" class:child={node.child}>
                      <span class="guide {node.guide}">
                        {#if node.toggle}<button class="toggle" class:plus={node.toggle === '+'} aria-label="toggle {node.name}"></button>{/if}
                      </span>
                      {#if node.child}<input type="checkbox" checked aria-label={node.name} />{/if}
                      {#if node.tick}{@render icon('check', 14)}{/if}
                      {@render icon(node.icon, 16)}
                      <span>{node.name}</span>
                    </div>
                  </td>
                  <td></td>
                </tr>
              {/each}
              {#each blankRows as _}
                <tr><td></td><td></td></tr>
              {/each}
            </tbody>
          </table>
        </div>
      </section>

      <section class="view">
        <svg class="model" width="280" height="242" viewBox="666 281 280 242" aria-label="块">
          <path d="M748 326L875 309L867 383L740 401z" fill="#c1d8df" />
          <path d="M740 401L867 383L894 488L766 505z" fill="#545d60" />
          <path d="M875 309L901 413L894 488L867 383z" fill="#8b999f" />
          <path d="M748 326L875 309L901 413L894 488L766 505L740 401zM740 401L867 383L875 309M867 383L894 488" fill="none" stroke="#1e2526" />
          <path d="M875 309L901 413L897 468" fill="none" stroke="#a36c6c" />
          <path d="M884 345L891 356L886 357z" fill="#704343" />
          <path d="M889 371L895 376L899 406L889 374z" fill="#0c35cf" stroke="#0c35cf" />
          <path d="M901 416V441L898 446L896 441z" fill="#2bbb2f" stroke="#2bbb2f" />
          <path d="M891 382L890 404L898 438" fill="none" stroke="#a36c6c" />
          <path d="M891 378L849 385L858 419L855 445L898 439" fill="none" stroke="#d8d8d8" stroke-width="1.500" />
          <path d="M830 423L906 413" stroke="#e4e4e4" />
          <path d="M845 421L858 417L901 413L858 421z" fill="#ef9f9f" />
          <path d="M815 425L832 420V426z" fill="#eee" />
          <path d="M894 452L900 456L897 464z" fill="#a35f5f" />
          <text x="804" y="432" fill="#ccc">X</text>
          <text x="842" y="437" fill="#c92d2d">XC</text>
          <text x="893" y="364" fill="#1e40e5">ZC</text>
          <text x="900" y="459" fill="#2a922c">YC</text>
          <text x="877" y="343" fill="#bbaaaa">Z</text>
          <text x="891" y="470" fill="#d29a9a">Y</text>
          <path d="M666.500 281.500H944.500V522.500H666.500z" fill="none" stroke="#f33" />
        </svg>
      </section>

      <svg class="stamp" width="118" height="120" viewBox="12 419 118 120" aria-label="UG爱好者">
        <path d={brushRing()} />
        <circle cx="70" cy="441" r="5" />
        <path d="M50 447Q61 443 70 450Q81 443 93 442L96 446Q84 450 78 457Q86 468 86 479L77 481Q75 469 69 463Q65 467 63 473L54 469Q60 464 63 456Q58 451 50 447z" />
        <text x="35" y="497" class="ug">UG</text>
        <text x="71" y="497" class="fans">爱好者</text>
        <rect x="26" y="500" width="95" height="12" rx="2" />
        <text x="28" y="510" class="url">WWW.UGSNX.COM</text>
      </svg>
    </main>
  </div>
</div>

<style>
  :global(body) {
    margin: 0;
    overflow: hidden;
  }

  .app {
    height: 100vh;
    display: flex;
    flex-direction: column;
    overflow: hidden;
    background: #151515;
    color: #111;
    font: 12px/16px "Noto Sans", "Noto Sans CJK SC", sans-serif;
  }

  .defs {
    position: absolute;
  }

  button {
    display: flex;
    align-items: center;
    justify-content: center;
    padding: 0;
    border: 0;
    background: none;
    color: inherit;
    font: inherit;
    white-space: nowrap;
  }

  svg {
    flex: none;
    display: block;
  }

  .title {
    position: relative;
    flex: none;
    height: 31px;
    box-sizing: border-box;
    padding: 6px 0 0 7px;
    display: flex;
    align-items: center;
    gap: 5px;
    border-top: 1px solid #7ba5e3;
    border-bottom: 1px solid #000;
    border-radius: 6px 0 0 0;
    background: linear-gradient(#000 1px, #55585a 1px, #626466 8px, #3d3f40 10px, #1c1c1c 10px);
    color: #fff;
  }

  h1 {
    display: flex;
    gap: 10px;
    margin: 0;
    font: bold 13px/16px "Liberation Mono", "Noto Sans CJK SC", monospace;
    white-space: nowrap;
  }

  .product {
    display: flex;
  }

  h1 em {
    color: #f22;
    font-style: normal;
  }

  .mark {
    position: absolute;
    left: 9px;
    top: 0;
    width: 466px;
    height: 32px;
    border: 1px solid #f33;
    z-index: 1;
  }

  .frame {
    flex: 1;
    min-height: 0;
    margin-left: 4px;
    display: flex;
    flex-direction: column;
    background: #d6d6d6;
  }

  .menu {
    flex: none;
    height: 27px;
    box-sizing: border-box;
    display: flex;
    align-items: center;
    background: linear-gradient(#e8e8e8, #dedede);
    border-top: 1px solid #fff;
  }

  .menu button {
    height: 22px;
    padding: 0 6px;
  }

  .menu .current {
    border: 1px solid #b5b5b5;
    padding: 0 5px;
  }

  .grip {
    flex: none;
    width: 8px;
    height: 22px;
    background: radial-gradient(circle, #999 1px, transparent 1px) 3px 0 / 4px 4px repeat-y;
  }

  .row {
    flex: none;
    display: flex;
    height: 34px;
    box-sizing: border-box;
    overflow: hidden;
    border-top: 1px solid #b3b3b3;
    background: linear-gradient(#fff 1px, #dfdfdf 1px, #cdcdcd);
  }

  .bar {
    flex: none;
    display: flex;
    align-items: center;
  }

  .bar + .bar {
    border-left: 1px solid #aaa;
    box-shadow: inset 1px 0 #f4f4f4;
  }

  .tool {
    flex: none;
    width: 31px;
    height: 28px;
  }

  .letter {
    font: bold 26px/28px "Liberation Serif", serif;
  }

  .drop,
  .more {
    flex: none;
    width: 12px;
    height: 28px;
  }

  .more {
    flex-direction: column;
    justify-content: space-between;
    padding-bottom: 4px;
    box-sizing: border-box;
  }

  .more i {
    margin-top: auto;
  }

  .chevrons {
    margin-left: 8px;
    margin-right: 2px;
  }

  .far {
    margin-left: 27px;
  }

  .sep {
    flex: none;
    width: 1px;
    height: 28px;
    margin: 0 2px;
    background: #aaa;
    border-right: 1px solid #fafafa;
  }

  .labelled {
    flex: none;
    padding: 0 3px 0 2px;
    gap: 4px;
  }

  .selection {
    flex: none;
    height: 30px;
    box-sizing: border-box;
    padding-left: 5px;
    display: flex;
    align-items: center;
    overflow: hidden;
    border-top: 2px solid #a2a2a2;
    background: linear-gradient(#c9c9c9, #dadada);
  }

  .selection .tool {
    width: 23px;
    height: 22px;
    box-sizing: border-box;
  }

  .selection .drop {
    width: 10px;
  }

  .selection .pressed {
    border: 1px solid #666;
    border-radius: 3px;
    background: #fff;
  }

  .combo {
    position: relative;
    flex: none;
    width: 151px;
    margin-right: 5px;
  }

  .combo.first {
    width: 143px;
    margin-right: 8px;
  }

  select {
    appearance: none;
    width: 100%;
    height: 20px;
    box-sizing: border-box;
    padding: 0 2px;
    display: block;
    border: 1px solid #777;
    border-radius: 3px;
    background: #fff;
    color: #000;
    font: inherit;
  }

  .combo i {
    position: absolute;
    top: 1px;
    right: 1px;
    width: 15px;
    height: 18px;
    background: linear-gradient(#eef6fc 30%, #64b5ed);
    border-left: 1px solid #2c66b7;
    pointer-events: none;
  }

  .combo i::after {
    content: "";
    display: block;
    margin: 6px 3px;
    border: 5px solid transparent;
    border-top: 6px solid #111;
    border-bottom: 0;
  }

  .status {
    flex: none;
    height: 22px;
    box-sizing: border-box;
    display: flex;
    align-items: center;
    border-top: 1px solid #f6f6f6;
    border-bottom: 1px solid #949494;
    background: #d9d9d9;
    font-size: 13px;
    font-weight: bold;
  }

  .status p {
    margin: 0;
    padding-left: 3px;
    height: 20px;
    line-height: 18px;
  }

  .status p:first-child {
    flex: 0 1 663px;
    border-right: 1px solid #aaa;
  }

  main {
    position: relative;
    flex: 1;
    min-height: 0;
    display: flex;
    overflow: hidden;
  }

  .tabs {
    flex: none;
    width: 33px;
    padding-top: 18px;
    box-sizing: border-box;
    background: #adadad;
  }

  .tab {
    width: 27px;
    height: 40px;
    margin: 0 0 1px 6px;
    box-sizing: border-box;
    border: 1px solid #777;
    border-right: 0;
    border-radius: 4px 0 0 4px;
    background: linear-gradient(90deg, #dedede, #c4c4c4);
    box-shadow: inset 1px 1px #f4f4f4;
  }

  .tab.active {
    width: 29px;
    height: 44px;
    margin-left: 4px;
    background: #ebebeb;
  }

  .tab.spaced {
    margin-top: 14px;
  }

  .navigator {
    flex: none;
    display: flex;
    flex-direction: column;
    width: 325px;
    box-sizing: border-box;
    padding: 0 10px 0 9px;
    background: #ebebeb;
    border-top: 1px solid #fff;
    border-left: 1px solid #fff;
    border-right: 1px solid #777;
  }

  h2 {
    display: flex;
    align-items: center;
    gap: 12px;
    height: 35px;
    box-sizing: border-box;
    margin: 0;
    padding: 3px 0 0 4px;
    font: inherit;
    font-size: 13px;
    font-weight: bold;
  }

  .tree {
    flex: 1;
    min-height: 0;
    overflow: hidden;
    border: 1px solid #666;
    border-bottom: 0;
    background: #fff;
  }

  table {
    width: 100%;
    table-layout: fixed;
    border-collapse: collapse;
    color: #222;
  }

  th {
    height: 20px;
    box-sizing: border-box;
    padding: 0 5px;
    border-right: 1px solid #aaa;
    border-bottom: 1px solid #888;
    background: linear-gradient(#f6f6f6, #d5d8da);
    font-weight: normal;
    text-align: left;
  }

  th.name {
    width: 200px;
  }

  th svg {
    display: inline;
    margin-left: 12px;
    vertical-align: 2px;
  }

  td {
    height: 20px;
    box-sizing: border-box;
    padding: 0;
    border-right: 1px solid #e4e4e4;
    border-bottom: 1px solid #e4e4e4;
  }

  tbody tr:nth-child(even) {
    background: #f7f7f7;
  }

  .node {
    display: flex;
    align-items: center;
    gap: 2px;
    height: 19px;
    white-space: nowrap;
  }

  .node.child {
    padding-left: 20px;
  }

  .guide {
    position: relative;
    width: 17px;
    height: 20px;
    box-sizing: border-box;
    background:
      repeating-linear-gradient(#999 0 1px, transparent 1px 2px) 9px 0 / 1px 100% no-repeat,
      repeating-linear-gradient(90deg, #999 0 1px, transparent 1px 2px) 9px 10px / 9px 1px no-repeat;
  }

  .guide.first {
    background-position: 9px 10px;
  }

  .guide.last {
    background-size: 1px 10px, 9px 1px;
  }

  .toggle {
    position: absolute;
    left: 5px;
    top: 6px;
    width: 9px;
    height: 9px;
    border: 1px solid #888;
    border-radius: 1px;
    background: linear-gradient(#222, #222) 1px 3px / 5px 1px no-repeat, #fff;
  }

  .toggle.plus {
    background: linear-gradient(#222, #222) 1px 3px / 5px 1px no-repeat, linear-gradient(#222, #222) 3px 1px / 1px 5px no-repeat, #fff;
  }

  input {
    appearance: none;
    width: 12px;
    height: 12px;
    margin: 0 0 0 2px;
    box-sizing: border-box;
    border: 1px solid #000;
    background: #fff;
  }

  input:checked::after {
    content: "";
    display: block;
    width: 3px;
    height: 6px;
    margin: 0 0 0 3px;
    border: solid #12b022;
    border-width: 0 2px 2px 0;
    transform: rotate(40deg);
  }

  .view {
    position: relative;
    flex: 1;
    overflow: hidden;
    background: linear-gradient(#b3b4b6, #e2e3e5);
  }

  .model {
    position: absolute;
    left: 304px;
    top: 69px;
    font: 15px "Liberation Sans", sans-serif;
  }

  .stamp {
    position: absolute;
    left: 8px;
    top: 207px;
    fill: #f00;
  }

  .ug {
    font: bold 20px "DejaVu Sans", sans-serif;
  }

  .fans {
    font: bold 15px "Noto Sans CJK SC", sans-serif;
  }

  .url {
    fill: #fff;
    font: bold 10px "Liberation Sans", sans-serif;
  }
</style>
